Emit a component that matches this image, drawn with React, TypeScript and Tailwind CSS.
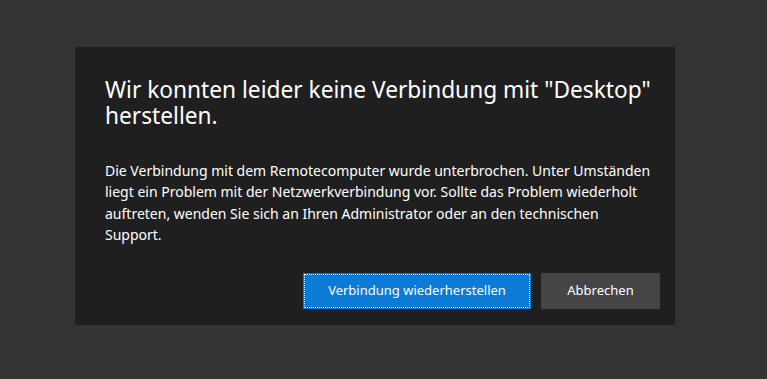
export default function App() {
  return (
    <div className="min-h-[379px] w-full bg-[#333333] pl-[75px] pt-[47px] font-['Noto_Sans',sans-serif]">
      <div className="flex w-[600px] flex-col bg-[#1f1f1f] pb-[16px] pl-[30px] pr-[15px] pt-[30px]">
        <h1 className="w-[555px] text-[22.7px] leading-[26px] text-white">
          Wir konnten leider keine Verbindung mit "Desktop" herstellen.
        </h1>
        <p className="mt-[31px] w-[549px] text-[14px] leading-[21.3px] text-white">
          Die Verbindung mit dem Remotecomputer wurde unterbrochen. Unter Umständen liegt ein Problem mit der
          Netzwerkverbindung vor. Sollte das Problem wiederholt auftreten, wenden Sie sich an Ihren Administrator
          oder an den technischen Support.
        </p>
        <div className="mt-[28px] flex justify-end gap-[10px]">
          <button className="h-[36px] w-[228px] bg-[#0c7bd6] p-px text-[13px] text-white">
            <span className="flex h-full w-full items-center justify-center border border-dotted border-white">
              Verbindung wiederherstellen
            </span>
          </button>
          <button className="h-[36px] w-[119px] bg-[#454545] text-[13px] text-white">Abbrechen</button>
        </div>
      </div>
    </div>
  )
}
